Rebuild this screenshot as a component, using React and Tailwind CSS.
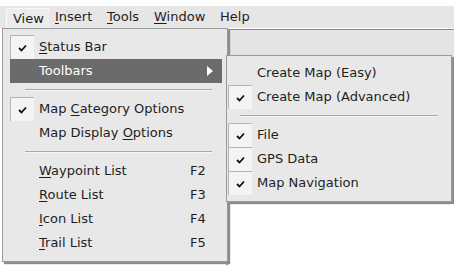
import React from "react";

const font = { fontFamily: '"DejaVu Sans", "Liberation Sans", sans-serif' };

function Check() {
  return (
    <svg width="9" height="8" viewBox="0 0 9 8" className="block">
      <path d="M1 4 L3.5 6.5 L8 1.5" fill="none" stroke="#111" strokeWidth="1.8" />
    </svg>
  );
}

function CheckBox({ on }) {
  return (
    <div className="flex h-[24px] w-[24px] shrink-0 items-center justify-center">
      {on && (
        <div className="flex h-[24px] w-[24px] items-center justify-center border-l border-t border-[#b4b4b4] bg-[#f4f4f4]">
          <Check />
        </div>
      )}
    </div>
  );
}

function Item({ label, u, rest, pre, keyText, checked, active, arrow, sub }) {
  return (
    <div className={"flex h-[24px] items-center " + (sub ? "pl-[1px]" : "pl-[7px] pr-[5px]")}>
      <div
        className={
          "flex h-full flex-1 items-center " +
          (active ? "bg-[#6b6b6b] text-white" : "text-[#1e1e1e]")
        }
      >
        <CheckBox on={checked} />
        <span className="flex-1 whitespace-nowrap pl-[5px]">
          {pre}
          {u && <span className="underline underline-offset-2">{u}</span>}
          {rest}
          {label}
        </span>
        {keyText && <span className="w-[32px]">{keyText}</span>}
        {arrow && (
          <svg width="6" height="10" viewBox="0 0 6 10" className="mr-[9px]">
            <path d="M0 0 L6 5 L0 10 Z" fill="#fff" />
          </svg>
        )}
      </div>
    </div>
  );
}

function Sep({ sub }) {
  return (
    <div className={"flex h-[14px] items-center " + (sub ? "pl-[13px] pr-[13px]" : "pl-[22px] pr-[15px]")}>
      <div className="h-[2px] w-full border-t border-b border-t-[#a8a8a8] border-b-[#f6f6f6]" />
    </div>
  );
}

export default function App() {
  return (
    <div className="relative h-[265px] w-[454px] overflow-hidden bg-white text-[13px]" style={font}>
      <div className="mt-[6px] flex h-[22px] items-center bg-[#e6e6e6] text-[#1e1e1e]">
        <div className="ml-[6px] flex h-[20px] w-[44px] items-center self-end border-l border-t border-[#f8f8f8] bg-[#ececec] pl-[6px]">
          View
        </div>
        <div className="w-[52px] pl-[5px]"><span className="underline underline-offset-2">I</span>nsert</div>
        <div className="w-[47px] pl-[5px]"><span className="underline underline-offset-2">T</span>ools</div>
        <div className="w-[68px] pl-[5px]"><span className="underline underline-offset-2">W</span>indow</div>
        <div className="pl-[3px]">Help</div>
      </div>
      <div className="absolute left-[226px] top-[29px] h-[236px] w-[228px] border-l-2 border-t border-[#8a8a8a] bg-[#ffffff]">
        <div className="h-[26px] bg-[#e4e4e4]" />
      </div>

      <div className="absolute left-[2px] top-[28px] h-[234px] w-[226px] border border-[#9a9a9a] bg-[#e8e8e8] pt-[6px] shadow-[2px_2px_1px_#8c8c8c]">
        <Item u="S" rest="tatus Bar" checked />
        <Item label="Toolbars" active arrow />
        <Sep />
        <Item pre="Map " u="C" rest="ategory Options" checked />
        <Item pre="Map Display " u="O" rest="ptions" />
        <Sep />
        <Item u="W" rest="aypoint List" keyText="F2" />
        <Item u="R" rest="oute List" keyText="F3" />
        <Item u="I" rest="con List" keyText="F4" />
        <Item u="T" rest="rail List" keyText="F5" />
      </div>

      <div className="absolute left-[226px] top-[55px] h-[147px] w-[226px] border border-[#9a9a9a] bg-[#e8e8e8] pt-[5px] shadow-[2px_2px_1px_#8c8c8c]">
        <Item sub label="Create Map (Easy)" />
        <Item sub label="Create Map (Advanced)" checked />
        <Sep sub />
        <Item sub label="File" checked />
        <Item sub label="GPS Data" checked />
        <Item sub label="Map Navigation" checked />
      </div>
    </div>
  );
}
